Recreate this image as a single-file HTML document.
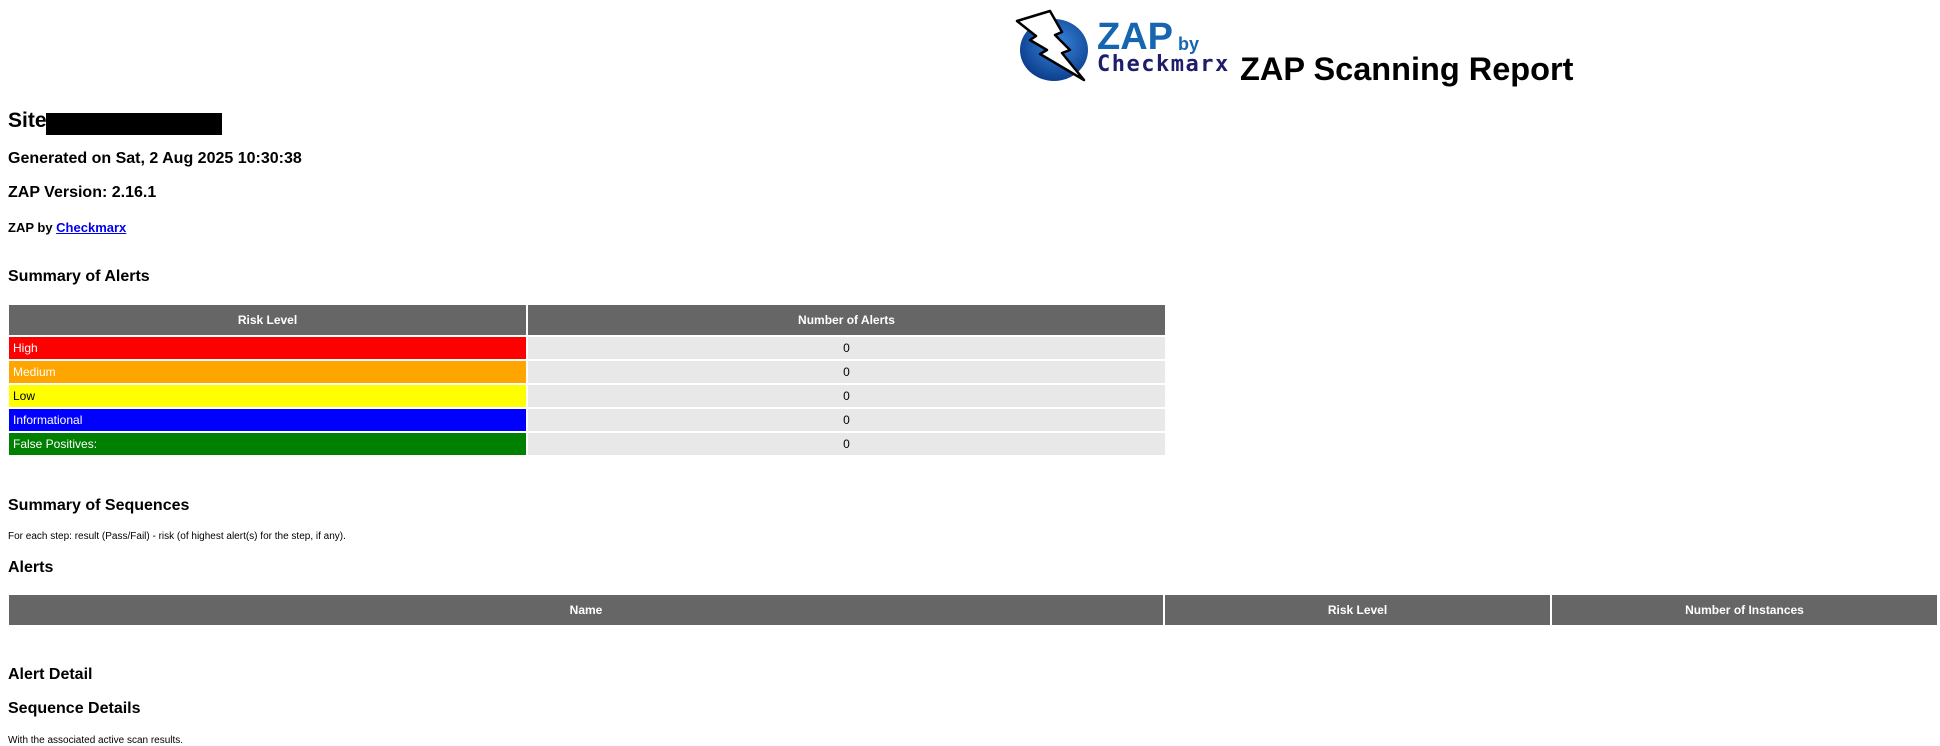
<!DOCTYPE html>
<html><head><meta charset="utf-8">
<style>
body{margin:0;width:1940px;height:743px;overflow:hidden;background:#fff;font-family:"Liberation Sans",Arial,sans-serif;color:#000;position:relative}
.a{position:absolute;white-space:nowrap;font-weight:bold}
table{position:absolute;border-collapse:separate;border-spacing:2px;font-size:12px}
th{background:#666;color:#fff;font-weight:bold;height:30px;padding:0}
td{height:22px;padding:0 0 0 4px}
td.n{background:#e8e8e8;text-align:center;padding:0}
</style></head><body>
<svg style="position:absolute;left:1010px;top:5px" width="90" height="80" viewBox="1010 5 90 80">
<defs><radialGradient id="g" cx="0.55" cy="0.4" r="0.6"><stop offset="0" stop-color="#3a86e0"/><stop offset="1" stop-color="#0c3f8c"/></radialGradient></defs>
<ellipse cx="1054" cy="50" rx="34" ry="31" fill="url(#g)"/>
<polygon points="1017,21 1050,11 1062,32 1055,35 1070,50 1062,53 1084,80 1040,54 1047,50 1030,40 1036,36" fill="#fff" stroke="#000" stroke-width="2.5" stroke-linejoin="round"/>
</svg>
<div class="a" style="left:1097px;top:16px;font-size:38px;color:#1565b0">ZAP</div>
<div class="a" style="left:1178px;top:34px;font-size:18px;color:#1565b0">by</div>
<div class="a" style="left:1097px;top:52px;font-size:22px;color:#1d1d6b;font-family:'DejaVu Sans Mono','Liberation Mono',monospace;letter-spacing:1.5px">Checkmarx</div>
<div class="a" style="left:1240px;top:51px;font-size:32.5px">ZAP Scanning Report</div>
<div class="a" style="left:8px;top:109px;font-size:21px">Site:</div>
<div style="position:absolute;left:46px;top:113px;width:176px;height:22px;background:#000"></div>
<div class="a" style="left:8px;top:150px;font-size:16px">Generated on Sat, 2 Aug 2025 10:30:38</div>
<div class="a" style="left:8px;top:184px;font-size:16px">ZAP Version: 2.16.1</div>
<div class="a" style="left:8px;top:220px;font-size:13px">ZAP by <a href="#" style="color:#00e">Checkmarx</a></div>
<div class="a" style="left:8px;top:268px;font-size:16px">Summary of Alerts</div>
<table style="left:7px;top:303px;width:1160px">
<tr><th style="width:517px">Risk Level</th><th>Number of Alerts</th></tr>
<tr><td style="background:#f00;color:#fff">High</td><td class="n">0</td></tr>
<tr><td style="background:#ffa500;color:#fff">Medium</td><td class="n">0</td></tr>
<tr><td style="background:#ff0;color:#000">Low</td><td class="n">0</td></tr>
<tr><td style="background:#00f;color:#fff">Informational</td><td class="n">0</td></tr>
<tr><td style="background:#008000;color:#fff">False Positives:</td><td class="n">0</td></tr>
</table>
<div class="a" style="left:8px;top:497px;font-size:16px">Summary of Sequences</div>
<div class="a" style="left:8px;top:531px;font-size:10px;font-weight:normal">For each step: result (Pass/Fail) - risk (of highest alert(s) for the step, if any).</div>
<div class="a" style="left:8px;top:559px;font-size:16px">Alerts</div>
<table style="left:7px;top:593px;width:1932px">
<tr><th style="width:1154px">Name</th><th style="width:385px">Risk Level</th><th>Number of Instances</th></tr>
</table>
<div class="a" style="left:8px;top:666px;font-size:16px">Alert Detail</div>
<div class="a" style="left:8px;top:700px;font-size:16px">Sequence Details</div>
<div class="a" style="left:8px;top:735px;font-size:10px;font-weight:normal">With the associated active scan results.</div>
</body></html>
